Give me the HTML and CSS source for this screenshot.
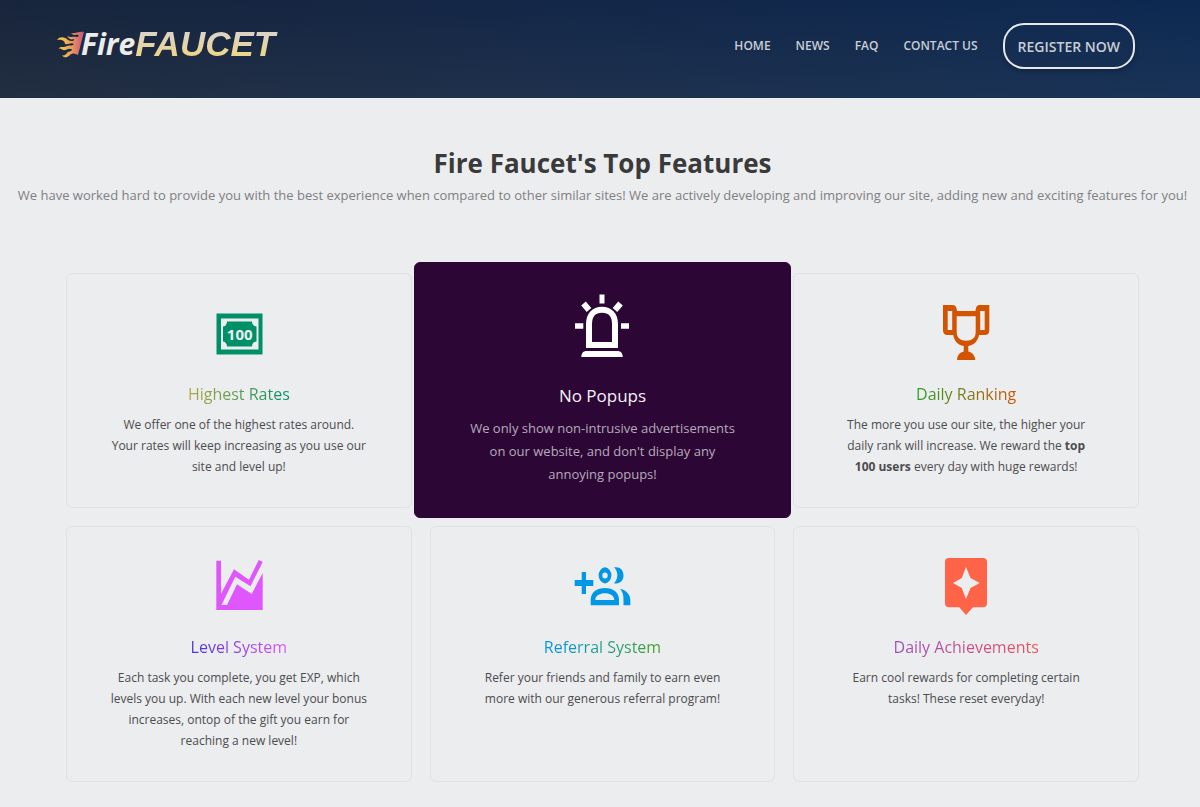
FILE: index.html
```html
<!DOCTYPE html>
<html lang="en">
<head>
<meta charset="utf-8">
<meta name="viewport" content="width=device-width, initial-scale=1">
<title>Fire Faucet</title>
<link rel="stylesheet" href="styles.css">
</head>
<body>
<header class="header">
  <a class="logo" href="#">
    <svg class="logo-flame" viewBox="0 0 28 27" aria-hidden="true">
      <defs><linearGradient id="flame"><stop offset="0" stop-color="#f6d23c"/><stop offset=".5" stop-color="#eda05c"/><stop offset="1" stop-color="#c8507a"/></linearGradient></defs>
      <path fill="url(#flame)" d="M27 1 21 24C18 22 15 22 13 24C10 27 7 27 5 24.500C8 25 9 23 11 21C13 20 15 20 15 18.500C12 16 9 20 6 19C4 18 3 17 1 18C4 14.500 7 17 10 15C13 14 16 15 17 13C14 11 11 14 8 13C8 10 5 8 0 9C3 5 8 6 11 9C14 11 18 10 17 8C14 9 12 8 10 5C14 7 17 5 20 6C23 6 22 3 18 4C16 4 15 3 14 2C18 3 22 0 27 1Z"/>
    </svg>
    <span class="logo-fire">Fire</span><span class="logo-faucet">FAUCET</span>
  </a>
  <nav class="nav">
    <a href="#">HOME</a>
    <a href="#">NEWS</a>
    <a href="#">FAQ</a>
    <a href="#">CONTACT US</a>
    <button class="register" type="button">REGISTER NOW</button>
  </nav>
</header>
<main>
  <section class="intro">
    <h1>Fire Faucet's Top Features</h1>
    <p>We have worked hard to provide you with the best experience when compared to other similar sites! We are actively developing and improving our site, adding new and exciting features for you!</p>
  </section>
  <section class="features">
    <article class="card rates">
      <svg class="icon" viewBox="0 0 64 64" aria-hidden="true">
        <path fill="currentColor" fill-rule="evenodd" d="M9.500 12.500H55.500V53.500H9.500ZM14 17.500V48.500H51.500V17.500Z"/>
        <path fill="currentColor" d="M20 20.500H45C45 23.500 47 25.500 49.500 25.500V40.500C47 40.500 45 42.500 45 45.500H20C20 42.500 18 40.500 16 40.500V25.500C18 25.500 20 23.500 20 20.500Z"/>
        <text class="note-value" x="32.700" y="39" text-anchor="middle">100</text>
      </svg>
      <h2>Highest Rates</h2>
      <p>We offer one of the highest rates around. Your rates will keep increasing as you use our site and level up!</p>
    </article>
    <article class="card popups featured">
      <svg class="icon" viewBox="0 0 70 70" aria-hidden="true">
        <path fill="currentColor" d="M32.500 3.500H37.500V12.500H32.500ZM8 32.300H16.300V37.700H8ZM54 32.300H62V37.700H54Z"/>
        <path fill="none" stroke="currentColor" stroke-width="6" d="M16.500 12.500 22 19M53.500 12.500 48 19M22 54V33C22 24 27 18.700 35 18.700S48 24 48 33V54Z"/>
        <path fill="currentColor" d="M14.300 66C14.300 62 16.500 60 19.500 60H50.500C53.500 60 55.700 62 55.700 66Z"/>
      </svg>
      <h2>No Popups</h2>
      <p>We only show non-intrusive advertisements on our website, and don't display any annoying popups!</p>
    </article>
    <article class="card ranking">
      <svg class="icon" viewBox="0 0 64 64" aria-hidden="true">
        <path fill="currentColor" fill-rule="evenodd" d="M9 4H19C21.500 4 22.700 6 23 10H41.500C41.700 6 43 4 45.300 4H55.300V29.500C55.300 32.500 53.500 34 51 34H45C44 40 40 44 34.300 45V50.500C38 51.500 41 54 41.300 59H23C23.200 54 26 51.500 29.700 50.500V45C24 44 20 40 19.300 34H13.500C10.500 34 9 32 9 29.500ZM13.700 10V29H18.200V10ZM46.200 10V29H50.700V10ZM22.700 15.300V31C22.700 37 26.500 39.700 32.200 39.700S41.700 37 41.700 31V15.300Z"/>
      </svg>
      <h2>Daily Ranking</h2>
      <p>The more you use our site, the higher your daily rank will increase. We reward the <strong>top 100 users</strong> every day with huge rewards!</p>
    </article>
    <article class="card level">
      <svg class="icon" viewBox="0 0 64 64" aria-hidden="true">
        <path fill="currentColor" d="M9.300 6.700H14V39.700L27 15.300 42 25.700 51.700 6 55.700 8 43.500 32.300 28.300 22.700 14.500 51H20L30 30.300 44.700 40 55.700 19V56H9.300Z"/>
      </svg>
      <h2>Level System</h2>
      <p>Each task you complete, you get EXP, which levels you up. With each new level your bonus increases, ontop of the gift you earn for reaching a new level!</p>
    </article>
    <article class="card referral">
      <svg class="icon" viewBox="0 0 64 64" aria-hidden="true">
        <path fill="currentColor" fill-rule="evenodd" d="M11.700 18H16V26H23.300V32H16V40H11.700V32H4.700V26H11.700ZM35 13.200A7.200 8.200 0 0 1 35 29.500A7.200 8.200 0 0 1 35 13.200ZM35 18.500A2.700 3 0 0 0 35 24.500A2.700 3 0 0 0 35 18.500ZM44 13.300C50 12.300 53.500 16 53.500 21.300S50 30.500 44 29.300C48.500 25 48.500 17.700 44 13.300ZM20.700 51.300V46C20.700 38 27 34 35 34S49 38 49 46V51.300ZM25.300 46H44.300C44 41.500 40 39.300 35 39.300S25.500 41.500 25.300 46ZM50 34.700C57 36.500 60.300 41 60.300 46V51.300H53.500V46C53.500 41 53 38.500 50 34.700Z"/>
      </svg>
      <h2>Referral System</h2>
      <p>Refer your friends and family to earn even more with our generous referral program!</p>
    </article>
    <article class="card achievements">
      <svg class="icon" viewBox="0 0 64 64" aria-hidden="true">
        <path fill="currentColor" fill-rule="evenodd" d="M15 4H49Q53 4 53 8V49.300Q53 53.300 49 53.300H39L32 61 25.300 53.300H15Q11 53.300 11 49.300V8Q11 4 15 4ZM32 13 27.800 24 19 29 27.800 34 32 45 36.500 34 45.700 29 36.500 24Z"/>
      </svg>
      <h2>Daily Achievements</h2>
      <p>Earn cool rewards for completing certain tasks! These reset everyday!</p>
    </article>
  </section>
</main>
</body>
</html>
```
FILE: styles.css
```css
* { box-sizing: border-box; }

body {
  margin: 0;
  background: #ecedef;
  color: #4b4c4e;
  font: 12px/21px "Open Sans", "Noto Sans", sans-serif;
}

h1, h2, p { margin: 0; }

.header {
  display: flex;
  align-items: center;
  justify-content: space-between;
  padding: 23px 65px 29px 57px;
  background:
    linear-gradient(to bottom, rgba(6, 30, 70, .35), rgba(38, 58, 84, .35)),
    linear-gradient(to right, #202836, #1a2b48 45%, #112f58);
}

.logo {
  display: flex;
  align-items: center;
  height: 46px;
  padding-bottom: 4px;
  line-height: 42px;
  text-decoration: none;
  font-style: italic;
  font-weight: 700;
}

.logo-flame { width: 28px; height: 27px; margin-right: -4px; }

.logo-fire { color: #ececec; font-size: 30px; }

.logo-faucet {
  font-family: "Liberation Sans", Arial, sans-serif;
  font-size: 35px;
  padding-right: 4px;
  background: linear-gradient(to bottom, #dcd3c4 28%, #efd58a 75%);
  -webkit-background-clip: text;
  background-clip: text;
  color: transparent;
}

.nav { display: flex; align-items: center; gap: 25px; }

.nav a {
  padding-bottom: 2px;
  color: #c9ced5;
  font-weight: 600;
  text-decoration: none;
}

.register {
  height: 46px;
  padding: 0 13px;
  border: 2px solid #e6e9ec;
  border-radius: 21px;
  background: transparent;
  box-shadow: 0 2px 4px rgba(0, 0, 0, .25);
  color: #c9ced5;
  font: 600 14px "Open Sans", "Noto Sans", sans-serif;
}

.intro {
  padding: 47px 5px 66px 10px;
  text-align: center;
}

.intro h1 { color: #3a3a3a; font-size: 26px; line-height: 36px; }

.intro p { margin-top: 2px; color: #7f8082; font-size: 13px; line-height: 24px; }

.features {
  display: grid;
  grid-template-columns: repeat(3, 1fr);
  gap: 18px;
  padding: 0 61px 25px 66px;
}

.card {
  display: flex;
  flex-direction: column;
  align-items: center;
  padding: 27px 42px 30px;
  border: 1px solid #e0e2e4;
  border-radius: 6px;
  text-align: center;
}

.icon { width: 64px; height: 64px; }

.note-value { fill: #ecedef; font-size: 15px; font-weight: 700; }

.card h2 {
  margin: 16px 0 7px;
  font-size: 16px;
  font-weight: 400;
  line-height: 26px;
  -webkit-background-clip: text;
  background-clip: text;
  color: transparent;
}

.rates .icon { color: #009068; }
.rates h2 { background-image: linear-gradient(to right, #b5a642, #009068); }
.ranking .icon { color: #d35400; }
.ranking h2 { background-image: linear-gradient(to right, #26a02c, #d35400); }
.level .icon { color: #e056fd; }
.level h2 { background-image: linear-gradient(to right, #4834d4, #e056fd); }
.referral .icon { color: #0097e6; }
.referral h2 { background-image: linear-gradient(to right, #0097e6, #44a02c); }
.achievements .icon { color: #ff6348; }
.achievements h2 { background-image: linear-gradient(to right, #9b4fc0, #ee5253); }

.featured {
  margin: -11px -16px -10px;
  padding: 28px 47px 31px;
  border-color: #2c0735;
  background: #2c0735;
  color: #b5abb9;
  font-size: 13px;
  line-height: 23px;
}

.featured .icon { width: 70px; height: 70px; color: #fff; }

.featured h2 {
  margin: 21px 0 7px;
  color: #f4f1f5;
  font-size: 17px;
  line-height: 28px;
}
```
